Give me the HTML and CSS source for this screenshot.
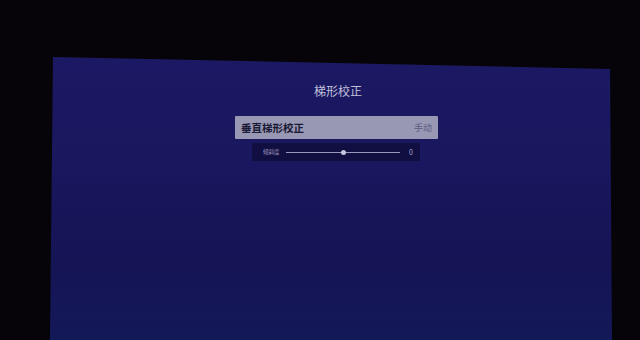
FILE: index.html
```html
<!DOCTYPE html>
<html lang="zh">
<head>
<meta charset="utf-8">
<link rel="stylesheet" href="styles.css">
</head>
<body>
<div class="room">
  <div class="screen">
    <div class="menu">
      <div class="title">梯形校正</div>
      <div class="row">
        <span class="row-label">垂直梯形校正</span>
        <span class="row-value">手动</span>
      </div>
      <div class="slider-row">
        <span class="slider-label">倾斜度</span>
        <div class="track"><span class="knob"></span></div>
        <span class="slider-value">0</span>
      </div>
    </div>
  </div>
</div>
</body>
</html>
```
FILE: styles.css
```css
html, body {
  margin: 0;
  padding: 0;
  background: #060409;
  width: 640px;
  height: 340px;
  overflow: hidden;
}
.room {
  width: 640px;
  height: 340px;
  padding: 57px 0 0 50px;
  box-sizing: border-box;
}
.screen {
  width: 562px;
  height: 283px;
  background: linear-gradient(180deg, #1c1964 0%, #19175d 40%, #151455 70%, #131859 100%);
  clip-path: polygon(3px 0, 560px 12px, 562px 100%, 0 100%);
  font-family: "Noto Sans CJK SC", "Noto Sans", sans-serif;
}
.menu {
  display: flex;
  flex-direction: column;
  align-items: flex-start;
  padding: 26px 0 0 185px;
}
.title {
  width: 206px;
  text-align: center;
  color: #c2c1da;
  font-size: 12px;
  line-height: 16px;
  margin: 0 0 17px 0;
}
.row {
  width: 203px;
  height: 23px;
  box-sizing: border-box;
  background: #9897b4;
  display: flex;
  align-items: center;
  justify-content: space-between;
  padding: 0 6px 0 6px;
  border-radius: 1px;
}
.row-label {
  color: #1b1a34;
  font-size: 10.5px;
  font-weight: 700;
}
.row-value {
  color: #5d5c80;
  font-size: 9px;
}
.slider-row {
  margin: 4px 0 0 17px;
  width: 168px;
  height: 18px;
  background: #110f42;
  display: flex;
  align-items: center;
  padding: 0 0 0 11px;
  box-sizing: border-box;
}
.slider-label {
  color: #9e9dbf;
  font-size: 5.5px;
  width: 23px;
}
.track {
  position: relative;
  width: 114px;
  height: 1px;
  background: #9a99bc;
}
.knob {
  position: absolute;
  left: 55px;
  top: -2px;
  width: 5px;
  height: 5px;
  border-radius: 50%;
  background: #c6c5dd;
}
.slider-value {
  color: #a9a8c8;
  font-size: 7px;
  margin-left: 9px;
}
```
